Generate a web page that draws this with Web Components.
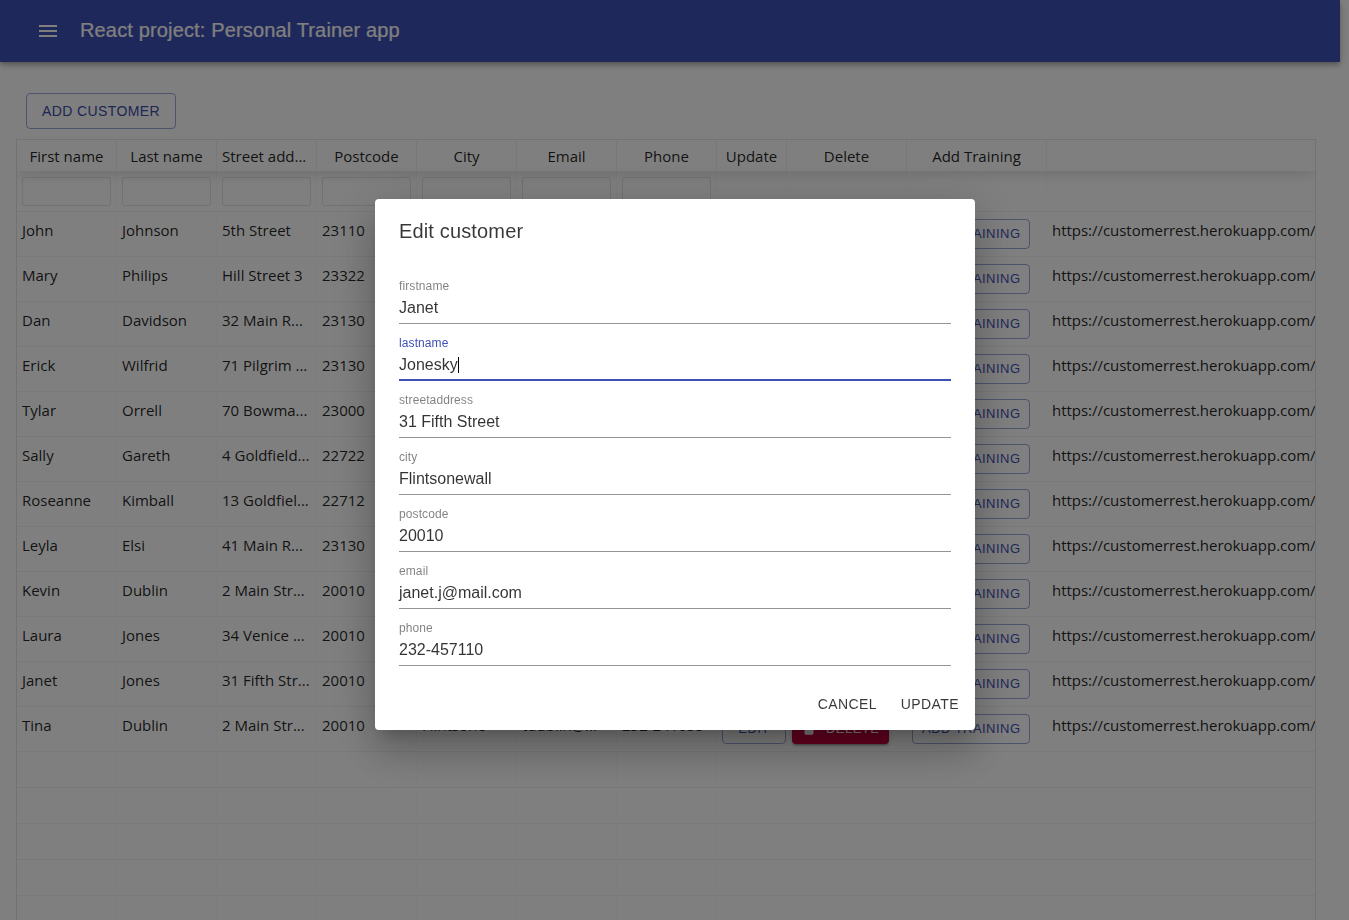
<!DOCTYPE html>
<html lang="en"><head><meta charset="utf-8"><title>Personal Trainer</title>
<style>html,body{margin:0;height:100%;overflow:hidden;background:#fff}</style>
</head><body>
<x-app>
  <x-appbar>React project: Personal Trainer app</x-appbar>
  <x-customers></x-customers>
</x-app>
<x-dialog heading="Edit customer">
  <x-field label="firstname">Janet</x-field>
  <x-field label="lastname" focused>Jonesky</x-field>
  <x-field label="streetaddress">31 Fifth Street</x-field>
  <x-field label="city">Flintsonewall</x-field>
  <x-field label="postcode">20010</x-field>
  <x-field label="email">janet.j@mail.com</x-field>
  <x-field label="phone">232-457110</x-field>
</x-dialog>
<script>
const def=(n,css,html,init)=>customElements.define(n,class extends HTMLElement{
  constructor(){super();this.attachShadow({mode:'open'}).innerHTML=`<style>${css}</style>`+(typeof html==='function'?html(this):html);}
  connectedCallback(){if(init)init(this);}
});
const ROBOTO='"Liberation Sans",Arial,sans-serif', GRID='"Open Sans","Noto Sans",sans-serif';

def('x-app',`:host{display:block;width:1340px;font-family:${ROBOTO}}`,`<slot></slot>`);

def('x-appbar',`:host{display:flex;align-items:center;height:62px;background:#3f51b5;color:#fff;padding-left:36px;box-sizing:border-box;
  box-shadow:0 2px 4px -1px rgba(0,0,0,.2),0 4px 5px 0 rgba(0,0,0,.14),0 1px 10px 0 rgba(0,0,0,.12);position:relative;z-index:1}
  svg{width:24px;height:24px;fill:currentColor;display:block;margin-right:20px}
  h1{margin:0;font:400 20px/32px ${ROBOTO};letter-spacing:.15px;position:relative;top:-1px;-webkit-text-stroke:.2px currentColor}`,
  `<svg viewBox="0 0 24 24"><path d="M3 18h18v-2H3v2zm0-5h18v-2H3v2zm0-7v2h18V6H3z"/></svg><h1><slot></slot></h1>`);

def('x-btn',`:host{display:inline-flex;align-items:center;justify-content:center;box-sizing:border-box;height:30px;min-width:64px;padding:0 9px 2px;
  font:400 13px/1 ${ROBOTO};letter-spacing:.46px;text-transform:uppercase;white-space:nowrap;color:#3f51b5;border:1px solid rgba(63,81,181,.5);border-radius:4px;background:transparent}
  :host([size=large]){height:36px;padding:0 15px;font-size:14px;letter-spacing:.4px;color:#3a4ca8}
  :host([danger]){background:#c80040;color:#fff;border:0;padding:0 10px 2px 8px;box-shadow:0 3px 1px -2px rgba(0,0,0,.2),0 2px 2px 0 rgba(0,0,0,.14),0 1px 5px 0 rgba(0,0,0,.12)}
  svg{display:none;width:18px;height:18px;fill:currentColor;margin-right:8px;flex:none}
  :host([danger]) svg{display:block}`,
  `<svg viewBox="0 0 24 24"><path d="M6 19c0 1.1.9 2 2 2h8c1.1 0 2-.9 2-2V7H6v12zM19 4h-3.5l-1-1h-5l-1 1H5v2h14V4z"/></svg><slot></slot>`);

const WIDTHS=[100,100,100,100,100,100,100,70,120,140];
const COLS=WIDTHS.map(w=>w+'px').join(' ')+' 1fr';
const ROWS=[
['John','Johnson','5th Street','23110'],['Mary','Philips','Hill Street 3','23322'],['Dan','Davidson','32 Main R...','23130'],
['Erick','Wilfrid','71 Pilgrim ...','23130'],['Tylar','Orrell','70 Bowma...','23000'],['Sally','Gareth','4 Goldfield...','22722'],
['Roseanne','Kimball','13 Goldfiel...','22712'],['Leyla','Elsi','41 Main R...','23130'],['Kevin','Dublin','2 Main Str...','20010'],
['Laura','Jones','34 Venice ...','20010'],['Janet','Jones','31 Fifth Str...','20010'],['Tina','Dublin','2 Main Str...','20010']];
const LAST=['Flintsone','tdublin@...','232-241655'];
const HEAD=['First name','Last name','Street add...','Postcode','City','Email','Phone','Update','Delete','Add Training',''];
const URL_TXT='https://customerrest.herokuapp.com/';

def('x-customers',`:host{display:block;padding:31px 24px 0 16px;font-family:${GRID};font-size:15px;color:rgba(0,0,0,.87)}
  .add{margin:0 0 10px 10px;display:flex;width:max-content}
  .table{border:1px solid rgba(0,0,0,.1);height:1000px;overflow:hidden;width:1298px}
  .r{display:grid;grid-template-columns:${COLS};box-sizing:border-box}
  .r>div{box-sizing:border-box;border-right:1px solid rgba(0,0,0,.02);padding:8px 5px 6px;white-space:nowrap;overflow:hidden;line-height:21px;min-width:0}
  .r>div.ov{overflow:visible;padding-top:7px}
  .ov x-btn{display:flex;width:max-content}
  .r>div.url{padding-right:0;border-right:0;overflow:visible;letter-spacing:-.03px}
  .head{height:31px;box-shadow:0 2px 15px 0 rgba(0,0,0,.15);position:relative}
  .r.head>div{padding:6px 5px 4px;text-align:center;border-right:1px solid rgba(0,0,0,.05);line-height:21px;height:31px}
  .r.head>div.lft{text-align:left}
  .r.head>div:last-child{border-right:0}
  .filter{height:41px;border-bottom:1px solid rgba(0,0,0,.05)}
  .r.filter>div{padding:6px 5px 5px;border-right:1px solid rgba(0,0,0,.02)}
  .filter i{display:block;height:29px;box-sizing:border-box;border:1px solid rgba(0,0,0,.1);border-radius:3px;background:#fff}
  .data{height:45px;border-bottom:1px solid rgba(0,0,0,.05)}
  .pad{height:36px;border-bottom:1px solid rgba(0,0,0,.05)}`,
  ()=>{
    const cell=(c,t='')=>`<div class="${t}">${c}</div>`;
    const head=`<div class="r head">${HEAD.map(h=>cell(h,h.endsWith('...')?'lft':'')).join('')}</div>`;
    const filter=`<div class="r filter">${WIDTHS.map((w,i)=>cell(i<7?'<i></i>':'')).join('')}<div style="border-right:0"></div></div>`;
    const data=ROWS.map((r,i)=>{
      const extra=i===ROWS.length-1?LAST:['','',''];
      return `<div class="r data">${r.map(t=>cell(t)).join('')}${extra.map(t=>cell(t)).join('')}`+
      cell('<x-btn>Edit</x-btn>','ov')+cell('<x-btn danger>Delete</x-btn>','ov')+cell('<x-btn>Add training</x-btn>','ov')+cell(URL_TXT,'url')+`</div>`;
    }).join('');
    const pad=Array.from({length:6},()=>`<div class="r pad">${WIDTHS.map(()=>cell('')).join('')}<div style="border-right:0"></div></div>`).join('');
    return `<x-btn size="large" class="add">Add customer</x-btn><div class="table">${head}${filter}${data}${pad}</div>`;
  });

def('x-field',`:host{display:block;box-sizing:border-box;height:57px;padding-top:12px;border-bottom:1px solid rgba(0,0,0,.42);font-family:${ROBOTO}}
  :host([focused]){border-bottom:2px solid #3f51b5}
  .l{font-size:12px;line-height:14px;letter-spacing:.1px;color:rgba(0,0,0,.5);display:block}
  :host([focused]) .l{color:#3f51b5}
  .v{display:flex;align-items:center;margin-top:3px;font-size:16px;line-height:24px;color:rgba(0,0,0,.8)}
  .c{display:none;width:1px;height:16px;background:#000;margin-left:0}
  :host([focused]) .c{display:block}`,
  el=>`<span class="l">${el.getAttribute('label')}</span><div class="v"><slot></slot><span class="c"></span></div>`);

def('x-dialog',`:host{position:fixed;inset:0;background:rgba(0,0,0,.5);display:block;z-index:10}
  .p{position:absolute;left:375px;top:199px;width:600px;height:531px;background:#fff;border-radius:4px;font-family:${ROBOTO};color:rgba(0,0,0,.78);
    box-shadow:0 11px 15px -7px rgba(0,0,0,.2),0 24px 38px 3px rgba(0,0,0,.14),0 9px 46px 8px rgba(0,0,0,.12);display:flex;flex-direction:column}
  h2{margin:0;padding:16px 24px;font:400 20px/32px ${ROBOTO};letter-spacing:.15px}
  .c{padding:4px 24px 11.5px;flex:1}
  .a{display:flex;justify-content:flex-end;gap:8px;padding:8px}
  .a span{display:block;padding:6px 8px;font-size:14px;line-height:24.5px;letter-spacing:.4px;text-transform:uppercase}`,
  el=>`<div class="p" role="dialog"><h2>${el.getAttribute('heading')}</h2><div class="c"><slot></slot></div><div class="a"><span>Cancel</span><span>Update</span></div></div>`);
</script>
</body></html>
